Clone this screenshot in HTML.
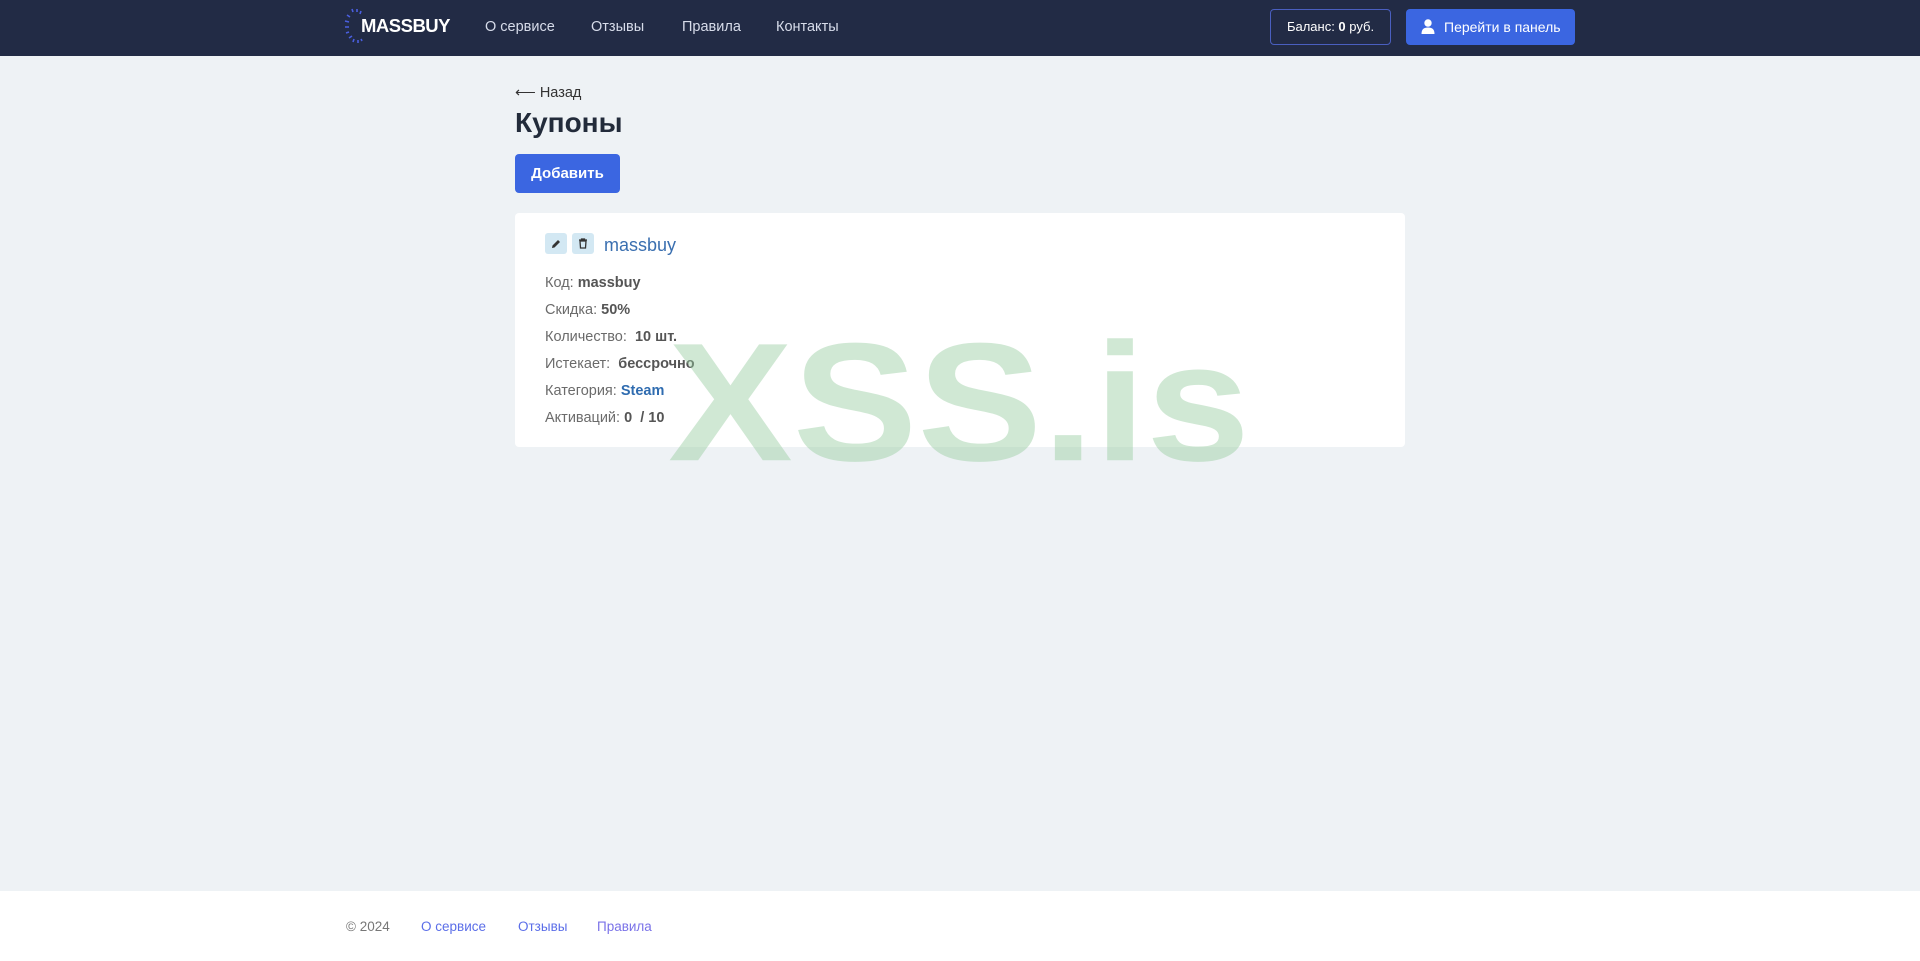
<!DOCTYPE html>
<html><head><meta charset="utf-8"><style>
*{margin:0;padding:0;box-sizing:border-box}
body{width:1920px;height:961px;background:#eef2f5;font-family:"Liberation Sans",sans-serif;position:relative;overflow:hidden;color:#333}
.hdr{position:absolute;left:0;top:0;width:1920px;height:56px;background:#222b45}
.abs{position:absolute;white-space:nowrap}
.nav{color:#d7dcea;font-size:14.5px;top:19px}
.logo{left:361px;top:15px;color:#fff;font-weight:bold;font-size:18.5px;letter-spacing:-0.5px}
.bal{left:1270px;top:9px;width:121px;height:36px;border:1px solid #4a5fbf;border-radius:4px;color:#fff;font-size:13px;text-align:center;line-height:34px}
.pan{left:1406px;top:9px;width:169px;height:36px;background:#3b66e1;border-radius:4px;color:#fff;font-size:14px;line-height:36px;padding-left:38px}
.card{left:515px;top:213px;width:890px;height:234px;background:#fff;border-radius:4px}
.ln{left:545px;font-size:14.5px;color:#6b6b6b}
.ln b{color:#555}
.ib{top:233px;width:22px;height:21px;background:#d3e8f3;border-radius:3px}
.ft{position:absolute;left:0;top:891px;width:1920px;height:70px;background:#fff}
.fl{top:919px;font-size:13.5px;color:#5b6ee8}
</style></head><body>
<div class="hdr"></div>
<svg class="abs" style="left:344px;top:7px" width="22" height="40" viewBox="0 0 22 40"><g stroke="#4a5fe0" stroke-width="1.6" fill="none">
<path d="M8 2l1 3M13 2l0 3M17 4l-1 3M3 8l3 2M1 14l4 1M1 20l4 0M2 26l3-1M5 31l3-2M9 35l1-3M14 36l0-3M18 34l-1-2"/></g></svg>
<div class="abs logo">MASSBUY</div>
<div class="abs nav" style="left:485px">О сервисе</div>
<div class="abs nav" style="left:591px">Отзывы</div>
<div class="abs nav" style="left:682px">Правила</div>
<div class="abs nav" style="left:776px">Контакты</div>
<div class="abs bal">Баланс: <b>0</b> руб.</div>
<div class="abs pan">Перейти в панель</div>
<svg class="abs" style="left:1421px;top:19px" width="14" height="15" viewBox="0 0 14 15"><circle cx="7" cy="4" r="3.7" fill="#fff"/><path d="M0.5 15c0-5 2.5-6.5 6.5-6.5s6.5 1.5 6.5 6.5z" fill="#fff"/></svg>

<div class="abs" style="left:515px;top:85px;font-size:14.5px;color:#333">⟵ Назад</div>
<div class="abs" style="left:515px;top:107px;font-size:28px;font-weight:bold;color:#222b3a">Купоны</div>
<div class="abs" style="left:515px;top:154px;width:105px;height:39px;background:#3b66e1;border-radius:4px;color:#fff;font-weight:bold;font-size:15px;text-align:center;line-height:39px">Добавить</div>

<div class="abs card"></div>
<div class="abs ib" style="left:545px"></div>
<div class="abs ib" style="left:572px"></div>
<svg class="abs" style="left:551px;top:239px" width="10" height="10" viewBox="0 0 10 10"><path d="M1 9l0.5-2.5 5.5-5.5 2 2-5.5 5.5z" fill="#333"/></svg>
<svg class="abs" style="left:578px;top:238px" width="10" height="11" viewBox="0 0 10 11"><path d="M1 2h8M3.5 2V1h3v1M2 3h6l-.5 7h-5z" fill="none" stroke="#333" stroke-width="1.3"/></svg>
<div class="abs" style="left:604px;top:235px;font-size:18px;color:#3a6fb0">massbuy</div>
<div class="abs ln" style="top:275px">Код: <b>massbuy</b></div>
<div class="abs ln" style="top:302px">Скидка: <b>50%</b></div>
<div class="abs ln" style="top:329px">Количество:&nbsp; <b>10 шт.</b></div>
<div class="abs ln" style="top:356px">Истекает:&nbsp; <b>бессрочно</b></div>
<div class="abs ln" style="top:383px">Категория: <b style="color:#2f6cb0">Steam</b></div>
<div class="abs ln" style="top:410px">Активаций: <b>0 &nbsp;/ 10</b></div>

<div class="abs" style="left:668px;top:318px;font-size:187px;font-weight:bold;color:rgba(150,205,160,0.45);line-height:1;transform:scaleY(0.9);transform-origin:0 0">XSS.is</div>

<div class="ft"></div>
<div class="abs fl" style="left:346px;color:#777">© 2024</div>
<div class="abs fl" style="left:421px">О сервисе</div>
<div class="abs fl" style="left:518px">Отзывы</div>
<div class="abs fl" style="left:597px;color:#7a72e8">Правила</div>
</body></html>
